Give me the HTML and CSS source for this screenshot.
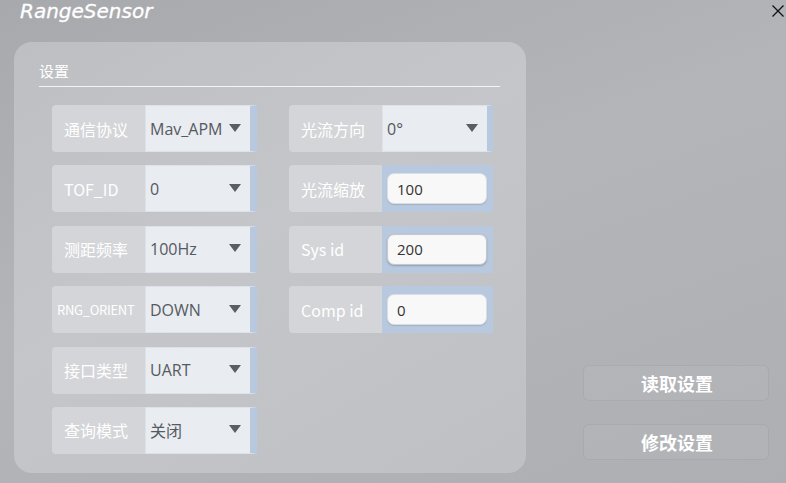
FILE: index.html
```html
<!DOCTYPE html>
<html lang="zh">
<head>
<meta charset="utf-8">
<title>RangeSensor</title>
<link rel="stylesheet" href="styles.css">
</head>
<body>
<div class="window">
  <header class="titlebar">
    <span class="title">RangeSensor</span>
    <svg class="close" width="12" height="12" viewBox="0 0 12 12"><path d="M0.5 0.5 L11.5 11.5 M11.5 0.5 L0.5 11.5" stroke="#111" stroke-width="1.3" fill="none"/></svg>
  </header>
  <div class="content">
    <section class="panel">
      <div class="panel-title">设置</div>
      <div class="grid">
        <div class="col">
          <div class="field"><div class="label">通信协议</div><div class="combo"><span class="value">Mav_APM</span><span class="caret"></span></div></div>
          <div class="field"><div class="label">TOF_ID</div><div class="combo"><span class="value">0</span><span class="caret"></span></div></div>
          <div class="field"><div class="label">测距频率</div><div class="combo"><span class="value">100Hz</span><span class="caret"></span></div></div>
          <div class="field"><div class="label label-small">RNG_ORIENT</div><div class="combo"><span class="value">DOWN</span><span class="caret"></span></div></div>
          <div class="field"><div class="label">接口类型</div><div class="combo"><span class="value">UART</span><span class="caret"></span></div></div>
          <div class="field"><div class="label">查询模式</div><div class="combo"><span class="value">关闭</span><span class="caret"></span></div></div>
        </div>
        <div class="col">
          <div class="field"><div class="label">光流方向</div><div class="combo combo-r"><span class="value">0°</span><span class="caret"></span></div></div>
          <div class="field"><div class="label">光流缩放</div><div class="entry"><div class="entry-box">100</div></div></div>
          <div class="field"><div class="label">Sys id</div><div class="entry"><div class="entry-box focused">200</div></div></div>
          <div class="field"><div class="label">Comp id</div><div class="entry"><div class="entry-box">0</div></div></div>
        </div>
      </div>
    </section>
    <aside class="actions">
      <button class="btn">读取设置</button>
      <button class="btn">修改设置</button>
    </aside>
  </div>
</div>
</body>
</html>
```
FILE: styles.css
```css
html, body {
  margin: 0;
  padding: 0;
}
body {
  width: 786px;
  height: 483px;
  overflow: hidden;
  font-family: "Noto Sans CJK SC", "Noto Sans", sans-serif;
}
.window {
  width: 786px;
  height: 483px;
  background: linear-gradient(160deg, #a8a9ad 0%, #b4b5b9 45%, #aeafb3 100%);
}
.titlebar {
  height: 42px;
  display: flex;
  justify-content: space-between;
  align-items: flex-start;
}
.title {
  font-family: "DejaVu Sans", sans-serif;
  font-style: italic;
  font-size: 20px;
  line-height: 22px;
  color: #fff;
  padding-left: 20px;
  -webkit-text-stroke: 0.3px #fff;
}
.close {
  margin-top: 5px;
  margin-right: 2px;
}
.content {
  display: flex;
  height: 441px;
}
.panel {
  margin-left: 14px;
  width: 512px;
  height: 431px;
  box-sizing: border-box;
  padding: 19px 26px 0 25px;
  border-radius: 18px;
  background: linear-gradient(150deg, #bebfc3 0%, #c5c6ca 45%, #bfc0c4 100%);
}
.panel-title {
  font-size: 15px;
  line-height: 20px;
  color: #fff;
  padding-bottom: 5px;
  border-bottom: 1px solid #f4f4f4;
}
.grid {
  margin-top: 18px;
  margin-left: 13px;
  display: grid;
  grid-template-columns: 205px 204px;
  column-gap: 32px;
  align-items: start;
}
.col {
  display: flex;
  flex-direction: column;
  gap: 13.4px;
}
.field {
  display: flex;
  height: 47px;
}
.label {
  width: 93px;
  box-sizing: border-box;
  padding-left: 12px;
  display: flex;
  align-items: center;
  background: #d4d5d8;
  border-radius: 4px 0 0 4px;
  color: #fff;
  font-size: 16px;
  white-space: nowrap;
}
.label-small {
  font-size: 13px;
  padding-left: 5px;
  letter-spacing: -0.3px;
}
.combo {
  width: 112px;
  box-sizing: border-box;
  display: flex;
  align-items: center;
  background: #e9ecf1;
  border: 1px solid #dde2ea;
  border-right: 7px solid #b8c9df;
  padding-left: 4px;
  padding-right: 9px;
}
.combo-r {
  width: 111px;
  border-right-width: 6px;
}
.value {
  flex: 1;
  font-family: "Open Sans", "Noto Sans CJK SC", sans-serif;
  font-size: 16px;
  color: #555a60;
  white-space: nowrap;
}
.caret {
  width: 0;
  height: 0;
  border-left: 6px solid transparent;
  border-right: 6px solid transparent;
  border-top: 8px solid #5a5d62;
  margin-top: -2px;
}
.entry {
  width: 111px;
  box-sizing: border-box;
  background: #b8c9df;
  padding: 8px 6px 8px 5px;
}
.entry-box {
  height: 31px;
  box-sizing: border-box;
  background: #f8f8f8;
  border: 1px solid #dadde2;
  border-radius: 7px;
  box-shadow: 0 1px 1px rgba(0, 0, 0, 0.12);
  padding-left: 9px;
  display: flex;
  align-items: center;
  font-family: "Open Sans", sans-serif;
  font-size: 15px;
  color: #333;
}
.entry-box.focused {
  border-color: #c4c7cc;
  box-shadow: 0 1px 2px rgba(0, 0, 0, 0.22), inset 0 0 1px rgba(0, 0, 0, 0.1);
}
.actions {
  margin-left: 57px;
  display: flex;
  flex-direction: column;
  justify-content: flex-end;
  gap: 23px;
  padding-bottom: 23px;
}
.btn {
  width: 186px;
  height: 36px;
  margin: 0;
  border: 1px solid rgba(0, 0, 0, 0.05);
  border-radius: 6px;
  background: rgba(255, 255, 255, 0.04);
  color: #fff;
  font-family: "Noto Sans CJK SC", sans-serif;
  font-size: 18px;
  font-weight: 700;
  padding: 0 0 0 2px;
  line-height: 34px;
}
```
